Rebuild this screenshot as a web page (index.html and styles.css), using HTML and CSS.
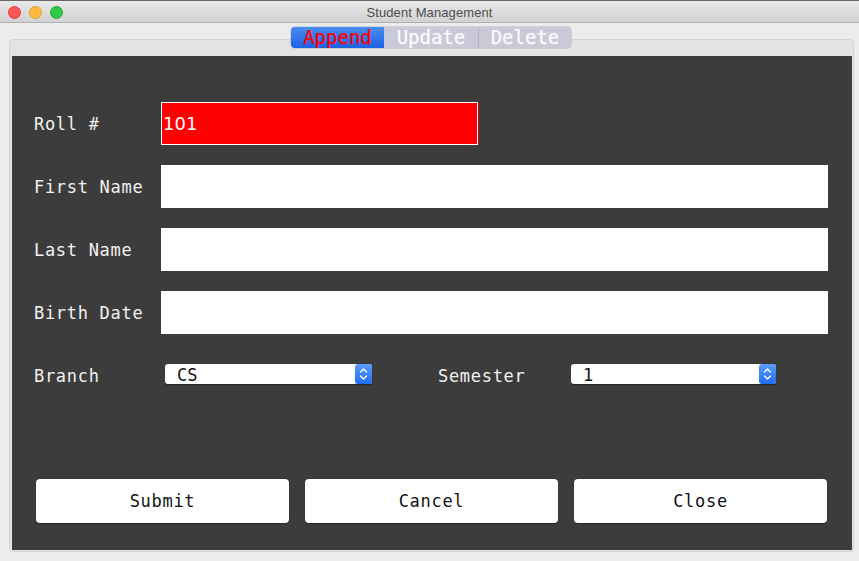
FILE: index.html
```html
<!DOCTYPE html>
<html>
<head>
<meta charset="utf-8">
<title>Student Management</title>
<link rel="stylesheet" href="styles.css">
</head>
<body>
<div class="window">
  <div class="titlebar">
    <div class="lights">
      <span class="light red"></span>
      <span class="light yellow"></span>
      <span class="light green"></span>
    </div>
    <div class="title">Student Management</div>
  </div>
  <div class="body">
    <div class="tabs">
      <span class="tab active">Append</span>
      <span class="tab">Update</span>
      <span class="tab">Delete</span>
    </div>
    <div class="tabpane">
      <div class="panel">
        <div class="form">
          <label class="label">Roll #</label>
          <div class="field roll"><span>101</span></div>
          <label class="label">First Name</label>
          <div class="field"></div>
          <label class="label">Last Name</label>
          <div class="field"></div>
          <label class="label">Birth Date</label>
          <div class="field"></div>
        </div>
        <div class="selects">
          <span class="label branch-label">Branch</span>
          <div class="select branch">
            <span class="sel-text">CS</span>
            <span class="stepper"><svg width="9" height="14" viewBox="0 0 9 14"><path d="M1.5 5 L4.5 2 L7.5 5 M1.5 9 L4.5 12 L7.5 9" fill="none" stroke="#fff" stroke-width="1.4" stroke-linecap="round" stroke-linejoin="round"/></svg></span>
          </div>
          <span class="label sem-label">Semester</span>
          <div class="select sem">
            <span class="sel-text">1</span>
            <span class="stepper"><svg width="9" height="14" viewBox="0 0 9 14"><path d="M1.5 5 L4.5 2 L7.5 5 M1.5 9 L4.5 12 L7.5 9" fill="none" stroke="#fff" stroke-width="1.4" stroke-linecap="round" stroke-linejoin="round"/></svg></span>
          </div>
        </div>
        <div class="buttons">
          <button class="btn">Submit</button>
          <button class="btn">Cancel</button>
          <button class="btn">Close</button>
        </div>
      </div>
    </div>
  </div>
</div>
</body>
</html>
```
FILE: styles.css
```css
* { box-sizing: border-box; }
html, body { margin: 0; padding: 0; }
body {
  width: 859px;
  height: 561px;
  background: #ececec;
  overflow: hidden;
  font-family: "DejaVu Sans Mono", monospace;
}
.window { position: relative; width: 859px; height: 561px; background: #ececec; }
.titlebar {
  position: relative;
  height: 23px;
  background: linear-gradient(#e8e8e8, #d2d2d2);
  border-top: 1px solid #6a6a6a;
  border-bottom: 1px solid #b0b0b0;
  display: flex;
  align-items: center;
  justify-content: center;
  padding-top: 2px;
}
.lights { position: absolute; left: 8px; top: 5px; display: flex; gap: 8px; }
.light { width: 13px; height: 13px; border-radius: 50%; display: block; }
.red { background: #fc5753; border: 0.5px solid #df3e3a; }
.yellow { background: #fdbc40; border: 0.5px solid #de9f2a; }
.green { background: #33c748; border: 0.5px solid #27aa35; }
.title {
  font-family: "Liberation Sans", Arial, sans-serif;
  font-size: 13px;
  color: #4d4d4d;
  letter-spacing: 0.1px;
}
.body { position: relative; padding: 16px 5px 0 9px; }
.tabs {
  position: absolute;
  left: 291px;
  top: 4px;
  display: flex;
  height: 21px;
  border-radius: 4px;
  overflow: hidden;
  background: #c9c9d7;
  box-shadow: 0 0 0 0.5px #b4b4c2;
  z-index: 2;
}
.tab {
  font-family: "DejaVu Sans Mono", monospace;
  font-size: 19px;
  line-height: 21px;
  color: #fbfbfd;
  text-align: center;
  display: block;
  -webkit-text-stroke: 0.25px currentColor;
}
.tab:nth-child(1) { width: 93px; }
.tab:nth-child(2) { width: 95px; border-right: 1px solid #b2b2c0; }
.tab:nth-child(3) { width: 92px; }
.tab.active {
  background: linear-gradient(#4a8cf0, #1c62e4);
  color: #ff0000;
}
.tabpane {
  width: 845px;
  height: 513px;
  border: 1px solid #d4d4d4;
  border-radius: 4px;
  background: #e3e3e3;
  padding: 16px 1px 0 2px;
}
.panel {
  width: 840px;
  height: 494px;
  background: #3c3c3c;
  padding: 46px 24px 27px 22px;
  display: flex;
  flex-direction: column;
}
.label {
  color: #f2f2f2;
  font-size: 17px;
  letter-spacing: 0.7px;
  white-space: nowrap;
}
.form {
  display: grid;
  grid-template-columns: 127px 1fr;
  grid-auto-rows: 43px;
  row-gap: 20px;
  align-items: center;
}
.field {
  height: 43px;
  background: #ffffff;
  display: flex;
  align-items: center;
}
.field.roll {
  width: 317px;
  background: #ff0000;
  border: 1px solid #ffffff;
  box-shadow: 1px 0 0 #d00000;
  color: #ffffff;
  font-family: "DejaVu Sans", sans-serif;
  font-size: 18px;
  padding-left: 1px;
}
.selects {
  margin-top: 30px;
  display: flex;
  align-items: center;
  height: 20px;
}
.selects .label { padding-top: 3px; }
.branch-label { width: 131px; }
.sem-label { width: 133px; margin-left: 66px; }
.select {
  height: 20px;
  background: #ffffff;
  border-radius: 3px;
  display: flex;
  align-items: center;
  justify-content: space-between;
  box-shadow: 0 0.5px 1px rgba(0,0,0,0.4);
}
.select.branch { width: 207px; }
.select.sem { width: 205px; }
.sel-text {
  font-size: 17px;
  color: #111;
  padding-left: 12px;
  padding-top: 1px;
  line-height: 20px;
}
.stepper {
  width: 17px;
  height: 20px;
  border-radius: 3px;
  background: linear-gradient(#5a9cf8, #1f6df2);
  display: flex;
  align-items: center;
  justify-content: center;
}
.buttons {
  margin-top: auto;
  display: flex;
  gap: 16px;
  padding-left: 2px;
  padding-right: 1px;
}
.btn {
  flex: 1;
  height: 44px;
  background: #ffffff;
  border: none;
  border-radius: 4px;
  box-shadow: 0 0.5px 1px rgba(0,0,0,0.35);
  font-family: "DejaVu Sans Mono", monospace;
  font-size: 17px;
  letter-spacing: 0.7px;
  color: #111;
  padding: 0;
}
```
